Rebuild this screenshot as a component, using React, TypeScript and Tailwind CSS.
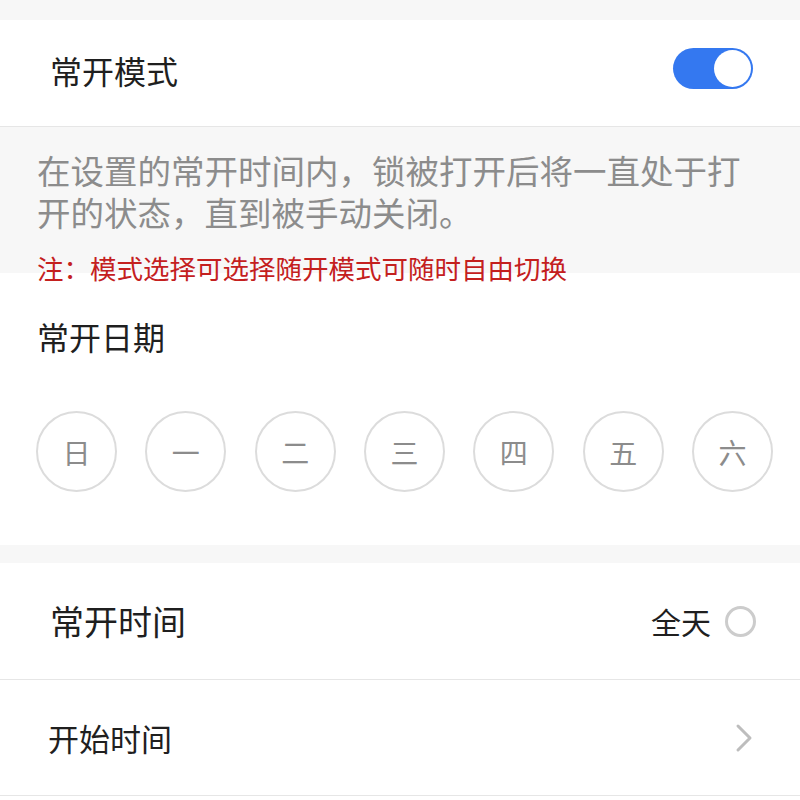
import React, { useState } from 'react';

const days = ['日', '一', '二', '三', '四', '五', '六'];

export default function App() {
  const [alwaysOn, setAlwaysOn] = useState(true);
  const [allDay, setAllDay] = useState(false);
  const [picked, setPicked] = useState<number[]>([]);

  const toggleDay = (i: number) => {
    setPicked((p) => (p.includes(i) ? p.filter((d) => d !== i) : [...p, i]));
  };

  return (
    <div className="w-[800px] h-[800px] overflow-hidden bg-white font-['Noto_Sans_CJK_SC','Noto_Sans',sans-serif]">
      <div className="h-[20px] bg-[#f7f7f7]" />

      {/* mode switch row */}
      <div className="h-[107px] pb-[6px] flex items-center justify-between pl-[50px] pr-[47px] border-b border-[#e6e6e6]">
        <span className="text-[32px] leading-[40px] text-[#1f1f1f]">常开模式</span>
        <button
          onClick={() => setAlwaysOn(!alwaysOn)}
          className={`-mt-[4px] w-[80px] h-[41px] rounded-full flex items-center p-[2px] ${alwaysOn ? 'bg-[#3478f0] justify-end' : 'bg-[#e5e5e5] justify-start'}`}
        >
          <span className="w-[37px] h-[37px] rounded-full bg-white" />
        </button>
      </div>

      <div className="bg-[#f7f7f7] pt-[22px] px-[37px]">
        <p className="text-[33.5px] leading-[42px] text-[#8c8c8c]">
          在设置的常开时间内，锁被打开后将一直处于打开的状态，直到被手动关闭。
        </p>
      </div>
      <div className="pt-[18px] bg-[linear-gradient(#f7f7f7_40px,#ffffff_40px)]">
        <p className="px-[37px] text-[26.5px] leading-[34px] text-[#c4201e]">注：模式选择可选择随开模式可随时自由切换</p>
      </div>

      <div className="mt-[31px] px-[37px] text-[32px] leading-[40px] text-[#1f1f1f]">常开日期</div>

      <div className="mt-[55px] mb-[53px] flex justify-between pl-[36px] pr-[27px]">
        {days.map((d, i) => (
          <button
            key={d}
            onClick={() => toggleDay(i)}
            className={`w-[81px] h-[81px] rounded-full border-2 flex items-center justify-center text-[28px] ${picked.includes(i) ? 'border-[#3478f0] bg-[#3478f0] text-white' : 'border-[#dcdcdc] text-[#8c8c8c]'}`}
          >
            {d}
          </button>
        ))}
      </div>

      <div className="h-[18px] bg-[#f7f7f7]" />

      <div className="h-[117px] flex items-center justify-between pl-[50px] pr-[44px] border-b border-[#e6e6e6]">
        <span className="text-[34px] leading-[42px] text-[#1f1f1f]">常开时间</span>
        <button onClick={() => setAllDay(!allDay)} className="flex items-center gap-[14px]">
          <span className="text-[30px] leading-[38px] text-[#1f1f1f]">全天</span>
          <span className={`w-[31px] h-[31px] rounded-full border-[3px] ${allDay ? 'border-[#3478f0] bg-[#3478f0]' : 'border-[#cccccc]'}`} />
        </button>
      </div>

      <div className="h-[116px] flex items-center justify-between pl-[48px] pr-[46px] border-b border-[#e6e6e6]">
        <span className="text-[31px] leading-[40px] text-[#1f1f1f]">开始时间</span>
        <svg width="20" height="30" viewBox="0 0 20 30" fill="none">
          <path d="M4 3 L16 15 L4 27" stroke="#bdbdbd" strokeWidth="3" strokeLinecap="round" strokeLinejoin="round" />
        </svg>
      </div>
    </div>
  );
}
